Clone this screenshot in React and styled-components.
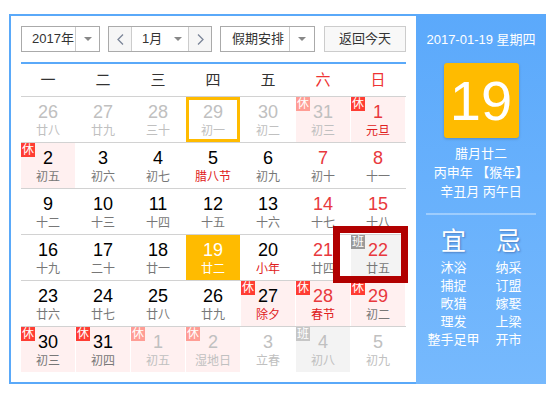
import React from 'react'
import styled, { createGlobalStyle } from 'styled-components'

const GlobalStyle = createGlobalStyle`
    body {
        margin: 0;
        background: #fff;
        font-family: "Liberation Sans", "Noto Sans CJK SC", sans-serif;
    }
`

const Frame = styled.div`
    display: flex;
    margin: 14px 0 0 9px;
    width: 538px;
`

const LeftPane = styled.div`
    width: 385px;
    padding: 10px 10px 10px 10px;
    border: 2px solid #5aa9f9;
    border-right: none;
`

const Toolbar = styled.div`
    display: flex;
    gap: 8px;
    height: 26px;
`

const SelectBox = styled.div`
    box-sizing: border-box;
    display: flex;
    width: ${p => p.w}px;
    height: 26px;
    border: 1px solid #aaa;
    background: #fff;
    font-size: 13px;
    color: #333;
`

const SelectText = styled.div`
    flex: 1;
    line-height: 24px;
    padding-left: ${p => p.pl || 10}px;
`

const ArrowBox = styled.div`
    width: ${p => p.w || 23}px;
    display: flex;
    align-items: center;
    justify-content: center;
    border-left: ${p => p.divider ? '1px solid #ccc' : 'none'};
    &::after {
        content: '';
        border-left: 4px solid transparent;
        border-right: 4px solid transparent;
        border-top: 4px solid #888;
    }
`

const NavButton = styled.div`
    width: 22px;
    display: flex;
    align-items: center;
    justify-content: center;
    background: #f6f6f6;
    border-${p => p.side}: 1px solid #ccc;
`

const TodayButton = styled.div`
    box-sizing: border-box;
    width: 82px;
    height: 26px;
    margin-left: 1px;
    border: 1px solid #ccc;
    background: #f8f8f8;
    font-size: 13px;
    color: #333;
    line-height: 24px;
    text-align: center;
`

const HeadRule = styled.div`
    height: 2px;
    margin-top: 10px;
    background: #5aa9f9;
`

const WeekRow = styled.div`
    display: grid;
    grid-template-columns: repeat(7, 54px);
    column-gap: 1px;
    height: 32px;
`

const WeekDay = styled.div`
    text-align: center;
    line-height: 32px;
    font-size: 15px;
    color: ${p => p.red ? '#e33' : '#333'};
`

const Body = styled.div`
    position: relative;
`

const Row = styled.div`
    display: grid;
    grid-template-columns: repeat(7, 54px);
    column-gap: 1px;
    border-top: 1px solid #d2d2d2;
`

const cellBg = { xiu: '#fff0f0', ban: '#f3f3f3', today: '#ffbb00' }

const Cell = styled.div`
    position: relative;
    height: 45px;
    text-align: center;
    background: ${p => cellBg[p.kind] || 'transparent'};
    box-shadow: ${p => p.sel ? 'inset 0 0 0 3px #ffbb00' : 'none'};
`

const badgeBg = {
    xiu: ['#ff3d33', '#ff9d95'],
    ban: ['#9a9a9a', '#c6c6c6'],
}

const Badge = styled.span`
    position: absolute;
    left: 0;
    top: 0;
    width: 14px;
    height: 14px;
    line-height: 14px;
    font-size: 12px;
    color: #fff;
    text-align: center;
    background: ${p => badgeBg[p.kind][p.faded ? 1 : 0]};
`

const DayNum = styled.div`
    padding-top: 5px;
    line-height: 20px;
    font-size: 18px;
    color: ${p => p.color};
`

const Lunar = styled.div`
    line-height: 19px;
    font-size: 12px;
    color: ${p => p.color};
`

const HoverFrame = styled.div`
    position: absolute;
    left: 312px;
    top: 130px;
    width: 75px;
    height: 57px;
    box-sizing: border-box;
    border: 7px solid #b10000;
    pointer-events: none;
`

const SidePanel = styled.div`
    width: 130px;
    height: 370px;
    background: linear-gradient(#5ba9fb, #76b9fd);
    color: #fff;
    text-align: center;
    padding-top: 16px;
    box-sizing: border-box;
`

const DateLine = styled.div`
    font-size: 13px;
    line-height: 20px;
`

const BigDay = styled.div`
    width: 75px;
    height: 75px;
    margin: 13px auto 0;
    background: #ffbb00;
    border-radius: 3px;
    box-shadow: 0 1px 3px rgba(0, 0, 0, 0.2);
    font-size: 56px;
    line-height: 75px;
`

const LunarInfo = styled.div`
    margin-top: 6px;
    font-size: 13px;
    line-height: 19px;
`

const SideRule = styled.div`
    height: 2px;
    margin: 12px 10px 0;
    background: rgba(255, 255, 255, 0.35);
`

const Almanac = styled.div`
    display: grid;
    grid-template-columns: 55px 55px;
    margin: 11px 10px 0;
`

const AlmanacCol = styled.div`
    display: flex;
    flex-direction: column;
    align-items: center;
`

const AlmanacTitle = styled.div`
    font-size: 25px;
    line-height: 30px;
    margin-bottom: 3px;
    text-shadow: 1px 1px 2px rgba(40, 60, 120, 0.45);
`

const AlmanacItem = styled.div`
    font-size: 13px;
    line-height: 18px;
    white-space: nowrap;
`

const Chevron = ({ dir }) => (
    <svg width="7" height="11" viewBox="0 0 7 11">
        <polyline
            points={dir === 'left' ? '6,0.5 1,5.5 6,10.5' : '1,0.5 6,5.5 1,10.5'}
            fill="none" stroke="#7b8598" strokeWidth="1.3" />
    </svg>
)

const weeks = [
    [
        { d: 26, l: '廿八', o: 1 }, { d: 27, l: '廿九', o: 1 }, { d: 28, l: '三十', o: 1 },
        { d: 29, l: '初一', o: 1, sel: 1 }, { d: 30, l: '初二', o: 1 },
        { d: 31, l: '初三', o: 1, h: 'xiu' }, { d: 1, l: '元旦', h: 'xiu', r: 1, f: 1 },
    ],
    [
        { d: 2, l: '初五', h: 'xiu' }, { d: 3, l: '初六' }, { d: 4, l: '初七' },
        { d: 5, l: '腊八节', f: 1 }, { d: 6, l: '初九' }, { d: 7, l: '初十', r: 1 }, { d: 8, l: '十一', r: 1 },
    ],
    [
        { d: 9, l: '十二' }, { d: 10, l: '十三' }, { d: 11, l: '十四' }, { d: 12, l: '十五' },
        { d: 13, l: '十六' }, { d: 14, l: '十七', r: 1 }, { d: 15, l: '十八', r: 1 },
    ],
    [
        { d: 16, l: '十九' }, { d: 17, l: '二十' }, { d: 18, l: '廿一' }, { d: 19, l: '廿二', t: 1 },
        { d: 20, l: '小年', f: 1 }, { d: 21, l: '廿四', r: 1 }, { d: 22, l: '廿五', h: 'ban', r: 1 },
    ],
    [
        { d: 23, l: '廿六' }, { d: 24, l: '廿七' }, { d: 25, l: '廿八' }, { d: 26, l: '廿九' },
        { d: 27, l: '除夕', h: 'xiu', f: 1 }, { d: 28, l: '春节', h: 'xiu', r: 1, f: 1 },
        { d: 29, l: '初二', h: 'xiu', r: 1 },
    ],
    [
        { d: 30, l: '初三', h: 'xiu' }, { d: 31, l: '初四', h: 'xiu' },
        { d: 1, l: '初五', o: 1, h: 'xiu' }, { d: 2, l: '湿地日', o: 1, h: 'xiu' },
        { d: 3, l: '立春', o: 1 }, { d: 4, l: '初八', o: 1, h: 'ban' }, { d: 5, l: '初九', o: 1 },
    ],
]

const yi = ['沐浴', '捕捉', '畋猎', '理发', '整手足甲']
const ji = ['纳采', '订盟', '嫁娶', '上梁', '开市']

const DayCell = ({ c }) => {
    let numColor = c.o ? '#c0c0c0' : c.r ? '#e8383d' : '#000'
    let lunColor = c.o ? '#c0c0c0' : c.f ? '#e02020' : '#777'
    if (c.t) { numColor = '#fff'; lunColor = '#fff' }
    return (
        <Cell kind={c.t ? 'today' : c.h} sel={c.sel}>
            {c.h && <Badge kind={c.h} faded={c.o}>{c.h === 'xiu' ? '休' : '班'}</Badge>}
            <DayNum color={numColor}>{c.d}</DayNum>
            <Lunar color={lunColor}>{c.l}</Lunar>
        </Cell>
    )
}

const App = () => {
    return (
        <>
            <GlobalStyle />
            <Frame>
                <LeftPane>
                    <Toolbar>
                        <SelectBox w={79}>
                            <SelectText>2017年</SelectText>
                            <ArrowBox divider w={23} />
                        </SelectBox>
                        <SelectBox w={104}>
                            <NavButton side="right"><Chevron dir="left" /></NavButton>
                            <SelectText pl={10}>1月</SelectText>
                            <ArrowBox w={20} />
                            <NavButton side="left"><Chevron dir="right" /></NavButton>
                        </SelectBox>
                        <SelectBox w={95}>
                            <SelectText pl={11}>假期安排</SelectText>
                            <ArrowBox divider w={24} />
                        </SelectBox>
                        <TodayButton>返回今天</TodayButton>
                    </Toolbar>
                    <HeadRule />
                    <WeekRow>
                        {['一', '二', '三', '四', '五', '六', '日'].map((w, i) => (
                            <WeekDay key={w} red={i > 4}>{w}</WeekDay>
                        ))}
                    </WeekRow>
                    <Body>
                        {weeks.map((wk, i) => (
                            <Row key={i}>
                                {wk.map((c, j) => <DayCell key={j} c={c} />)}
                            </Row>
                        ))}
                        <HoverFrame />
                    </Body>
                </LeftPane>
                <SidePanel>
                    <DateLine>2017-01-19 星期四</DateLine>
                    <BigDay>19</BigDay>
                    <LunarInfo>
                        <div>腊月廿二</div>
                        <div>丙申年 【猴年】</div>
                        <div>辛丑月 丙午日</div>
                    </LunarInfo>
                    <SideRule />
                    <Almanac>
                        <AlmanacCol>
                            <AlmanacTitle>宜</AlmanacTitle>
                            {yi.map(x => <AlmanacItem key={x}>{x}</AlmanacItem>)}
                        </AlmanacCol>
                        <AlmanacCol>
                            <AlmanacTitle>忌</AlmanacTitle>
                            {ji.map(x => <AlmanacItem key={x}>{x}</AlmanacItem>)}
                        </AlmanacCol>
                    </Almanac>
                </SidePanel>
            </Frame>
        </>
    )
}

export default App
